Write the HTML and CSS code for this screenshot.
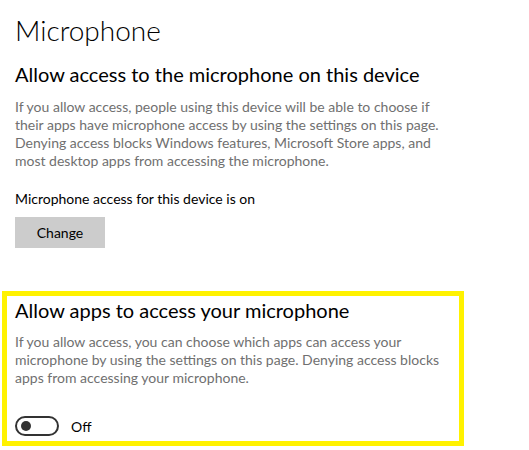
FILE: index.html
```html
<!DOCTYPE html>
<html lang="en">
<head>
    <meta charset="UTF-8">
    <title>Microphone</title>
    <link rel="stylesheet" href="styles.css">
</head>
<body>
    <div class="page">
        <h1 class="title">Microphone</h1>

        <div class="section">
            <h2>Allow access to the microphone on this device</h2>
            <p class="desc">If you allow access, people using this device will be able to choose if their apps have microphone access by using the settings on this page. Denying access blocks Windows features, Microsoft Store apps, and most desktop apps from accessing the microphone.</p>
            <p class="status">Microphone access for this device is on</p>
            <button class="change">Change</button>
        </div>

        <div class="section highlight">
            <h2>Allow apps to access your microphone</h2>
            <p class="desc">If you allow access, you can choose which apps can access your microphone by using the settings on this page. Denying access blocks apps from accessing your microphone.</p>
            <div class="toggle-row">
                <span class="toggle"><span class="knob"></span></span>
                <span class="toggle-label">Off</span>
            </div>
        </div>
    </div>
</body>
</html>
```

FILE: styles.css
```css
* {
    margin: 0;
    padding: 0;
    box-sizing: border-box;
}

body {
    font-family: Lato, "Open Sans", sans-serif;
    background-color: white;
    color: black;
}

.page {
    padding: 10px 0 0 2px;
}

.title {
    font-size: 28px;
    font-weight: 300;
    line-height: 40px;
    padding-left: 13px;
}

.section {
    padding-left: 13px;
}

.section h2 {
    font-size: 20px;
    font-weight: 400;
    line-height: 28px;
    margin-top: 10px;
}

.desc {
    font-size: 14px;
    line-height: 18px;
    color: #707070;
    max-width: 436px;
    margin-top: 10px;
}

.status {
    font-size: 14px;
    line-height: 20px;
    margin-top: 19px;
}

.change {
    display: block;
    width: 90px;
    height: 31px;
    margin-top: 8px;
    background-color: #cccccc;
    border: none;
    font-family: inherit;
    font-size: 14px;
    color: black;
}

.highlight {
    width: 462px;
    margin-top: 43px;
    border: 5px solid #fff200;
    padding: 0 0 5px 8px;
}

.highlight h2 {
    margin-top: 0;
}

.highlight .desc {
    margin-top: 9px;
}

.toggle-row {
    display: flex;
    align-items: center;
    gap: 12px;
    margin-top: 29px;
}

.toggle {
    display: flex;
    align-items: center;
    width: 44px;
    height: 20px;
    border: 2px solid #333333;
    border-radius: 10px;
    padding-left: 4px;
}

.knob {
    width: 10px;
    height: 10px;
    border-radius: 50%;
    background-color: #333333;
}

.toggle-label {
    font-size: 14px;
}
```
